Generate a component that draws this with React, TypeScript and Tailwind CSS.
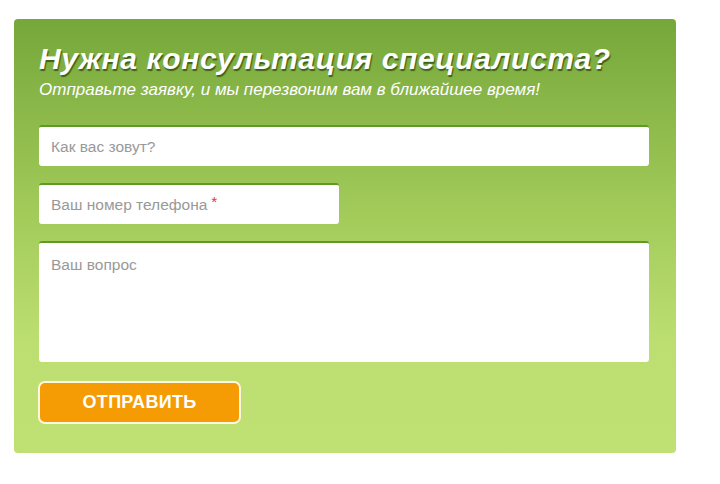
import React from "react";

export default function App() {
  return (
    <div className="w-[720px] h-[484px] bg-white pt-[19px] pl-[14px]" style={{ fontFamily: '"Liberation Sans", Arial, sans-serif' }}>
      <div className="w-[662px] h-[434px] rounded-[4px] bg-[linear-gradient(to_bottom,#76a73a_0%,#a2cb5a_45%,#bddf72_75%,#bfe073_100%)] pl-[25px] pr-[27px] pt-[23px]">
        <h1 className="text-[30px] leading-[34px] font-bold italic text-white [text-shadow:1px_2px_1px_rgba(40,70,10,0.75)] tracking-[0.6px]">
          Нужна консультация специалиста?
        </h1>
        <p className="mt-[4px] text-[17px] leading-[20px] italic text-white">
          Отправьте заявку, и мы перезвоним вам в ближайшее время!
        </p>
        <div className="mt-[25px] flex flex-col gap-[17px]">
          <div className="h-[41px] w-[610px] rounded-[3px] bg-white border-t-2 border-[#5d9b22] flex items-center pl-[12px] text-[15.5px] text-[#999]">
            Как вас зовут?
          </div>
          <div className="h-[41px] w-[300px] rounded-[3px] bg-white border-t-2 border-[#5d9b22] flex items-center pl-[12px] text-[15.5px] text-[#999]">
            Ваш номер телефона <span className="text-[#e23b2a] ml-[4px] relative -top-[3px]">*</span>
          </div>
          <div className="h-[121px] w-[610px] rounded-[3px] bg-white border-t-2 border-[#5d9b22] pl-[12px] pt-[13px] text-[15.5px] leading-[18px] text-[#999]">
            Ваш вопрос
          </div>
        </div>
        <button className="mt-[19px] -ml-[1px] w-[203px] h-[43px] rounded-[7px] bg-[#f59c05] border-2 border-[#fff8e0] text-white font-bold text-[18px] tracking-[0.3px] flex items-center justify-center">
          ОТПРАВИТЬ
        </button>
      </div>
    </div>
  );
}
